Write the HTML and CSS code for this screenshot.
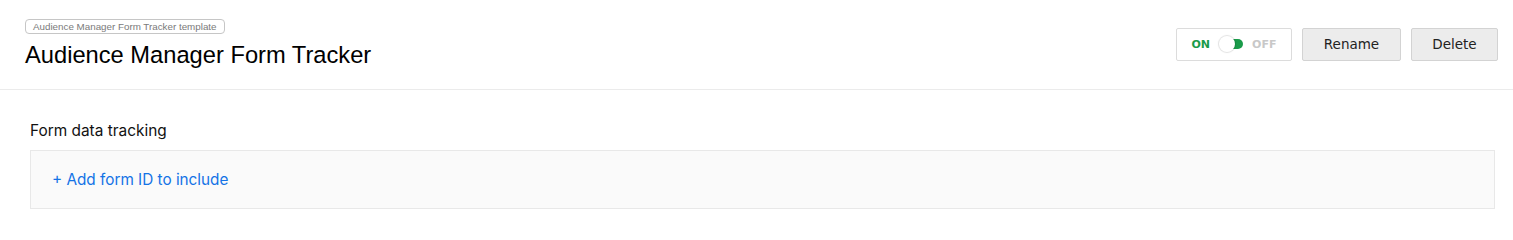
FILE: index.html
```html
<!DOCTYPE html>
<html>
<head>
<meta charset="utf-8">
<link rel="stylesheet" href="styles.css">
</head>
<body>
<header class="header">
  <div class="title-block">
    <span class="badge">Audience Manager Form Tracker template</span>
    <h1 class="title">Audience Manager Form Tracker</h1>
  </div>
  <div class="actions">
    <div class="toggle-box">
      <span class="on">ON</span>
      <span class="switch"><span class="track"></span><span class="knob"></span></span>
      <span class="off">OFF</span>
    </div>
    <button class="btn">Rename</button>
    <button class="btn">Delete</button>
  </div>
</header>
<section class="section">
  <div class="section-title">Form data tracking</div>
  <div class="panel">
    <a class="add-link" href="#">+ Add form ID to include</a>
  </div>
</section>
</body>
</html>
```
FILE: styles.css
```css
html, body {
  margin: 0;
  padding: 0;
  background: #ffffff;
}
body {
  font-family: "Liberation Sans", Arial, sans-serif;
  color: #000;
}
.header {
  height: 90px;
  box-sizing: border-box;
  border-bottom: 1px solid #ebebeb;
  display: flex;
  align-items: center;
  justify-content: space-between;
  padding: 0 15px 0 25px;
}
.title-block {
  display: flex;
  flex-direction: column;
  align-items: flex-start;
  padding-bottom: 2px;
}
.badge {
  display: inline-block;
  border: 1px solid #c6c6c6;
  border-radius: 4px;
  font-size: 9.8px;
  line-height: 13px;
  color: #7a7a7a;
  padding: 0 7px;
  margin-bottom: 7px;
}
.title {
  margin: 0;
  font-weight: normal;
  font-size: 23.7px;
  line-height: 28px;
}
.actions {
  display: flex;
  gap: 10px;
  margin-top: -1px;
}
.toggle-box {
  width: 116px;
  height: 33px;
  box-sizing: border-box;
  border: 1px solid #dcdcdc;
  border-radius: 2px;
  display: flex;
  align-items: center;
  justify-content: center;
  gap: 9px;
  font-family: "DejaVu Sans", Verdana, sans-serif;
  font-weight: bold;
  font-size: 11px;
}
.on { color: #1a9b4a; }
.off { color: #c8c8c8; }
.switch {
  position: relative;
  width: 24px;
  height: 16px;
  display: inline-block;
}
.track {
  position: absolute;
  left: 4px;
  top: 3px;
  width: 20px;
  height: 10px;
  border-radius: 5px;
  background: #1a9b4a;
}
.knob {
  position: absolute;
  left: 0;
  top: 0;
  width: 16px;
  height: 16px;
  border-radius: 50%;
  background: #fff;
  box-shadow: 0 0 1px 1px rgba(0,0,0,0.12);
}
.btn {
  height: 33px;
  box-sizing: border-box;
  border: 1px solid #d3d3d3;
  border-radius: 2px;
  background: #ececec;
  font-family: "DejaVu Sans", Verdana, sans-serif;
  font-size: 13.5px;
  color: #222;
  padding: 0 20px;
}
.btn:first-of-type { width: 99px; }
.btn:last-of-type { width: 87px; }
.section {
  padding: 32px 18px 0 30px;
}
.section-title {
  font-family: "Inter", "Liberation Sans", sans-serif;
  font-size: 15.4px;
  line-height: 18px;
  color: #111;
}
.panel {
  margin-top: 10px;
  height: 59px;
  box-sizing: border-box;
  border: 1px solid #e8e8e8;
  background: #fafafa;
  display: flex;
  align-items: center;
  padding-left: 21px;
}
.add-link {
  font-family: "Inter", "Liberation Sans", sans-serif;
  color: #1473e6;
  text-decoration: none;
  font-size: 15.3px;
}
```
